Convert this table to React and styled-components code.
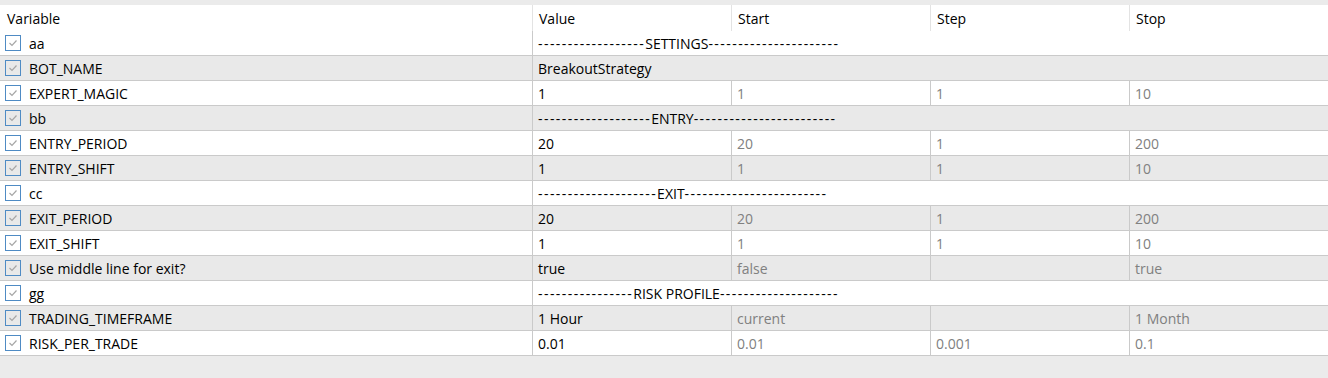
import React from 'react'
import styled, { createGlobalStyle } from 'styled-components'

const GlobalStyle = createGlobalStyle`
    html, body {
        margin: 0;
        padding: 0;
        background: #f0f0f0;
    }
    body {
        font-family: 'Open Sans', 'Noto Sans', sans-serif;
        font-size: 14px;
        color: #000;
    }
`

const params = [
    { name: 'aa', value: '------------------SETTINGS----------------------', span: true },
    { name: 'BOT_NAME', value: 'BreakoutStrategy', span: true },
    { name: 'EXPERT_MAGIC', value: '1', start: '1', step: '1', stop: '10' },
    { name: 'bb', value: '-------------------ENTRY------------------------', span: true },
    { name: 'ENTRY_PERIOD', value: '20', start: '20', step: '1', stop: '200' },
    { name: 'ENTRY_SHIFT', value: '1', start: '1', step: '1', stop: '10' },
    { name: 'cc', value: '--------------------EXIT------------------------', span: true },
    { name: 'EXIT_PERIOD', value: '20', start: '20', step: '1', stop: '200' },
    { name: 'EXIT_SHIFT', value: '1', start: '1', step: '1', stop: '10' },
    { name: 'Use middle line for exit?', value: 'true', start: 'false', step: '', stop: 'true' },
    { name: 'gg', value: '----------------RISK PROFILE--------------------', span: true },
    { name: 'TRADING_TIMEFRAME', value: '1 Hour', start: 'current', step: '', stop: '1 Month' },
    { name: 'RISK_PER_TRADE', value: '0.01', start: '0.01', step: '0.001', stop: '0.1' },
]

const Panel = styled.div`
    height: 378px;
    padding-top: 5px;
    box-sizing: border-box;
    background: #ebebeb;
    overflow: hidden;
`

const Grid = styled.div`
    display: grid;
    grid-template-columns: 532px 199px 199px 199px 199px;
    background: #fff;
`

const HeadCell = styled.div`
    height: 25px;
    padding-top: 1px;
    line-height: 26px;
    padding-left: ${p => (p.first ? '7px' : '6px')};
    border-left: ${p => (p.first ? 'none' : '1px solid #e3e3e3')};
    background: #fff;
    white-space: nowrap;
`

const Cell = styled.div`
    height: 23px;
    padding-top: 1px;
    line-height: 23px;
    padding-left: 5px;
    border-bottom: 1px solid #cacaca;
    border-left: ${p => (p.first ? 'none' : '1px solid #cacaca')};
    background: ${p => (p.odd ? '#e9e9e9' : '#fff')};
    color: ${p => (p.dim ? '#808080' : '#000')};
    grid-column: ${p => (p.span ? 'span 4' : 'auto')};
    white-space: nowrap;
    overflow: hidden;
    display: flex;
    align-items: center;
`

const Dashes = styled.span`
    letter-spacing: 1.45px;
`

const Check = styled.span`
    width: 14px;
    height: 14px;
    margin-top: -1px;
    border: 1px solid #4f8bc4;
    margin-right: 8px;
    display: inline-flex;
    align-items: center;
    justify-content: center;
    flex-shrink: 0;
`

const CheckBox = () => (
    <Check>
        <svg width="12" height="12" viewBox="0 0 12 12">
            <path d="M2.5 6 L5 8.5 L9.5 3.5" fill="none" stroke="#a6a6a6" strokeWidth="1.2" />
        </svg>
    </Check>
)

// separator titles: widen the runs of dashes the way the terminal font draws them
const Title = ({ text }) => (
    <span>
        {text.split(/(-+)/).filter(Boolean).map((part, i) =>
            part[0] === '-' ? <Dashes key={i}>{part}</Dashes> : <span key={i}>{part}</span>
        )}
    </span>
)

const App = () => {
    return (
        <Panel>
            <GlobalStyle />
            <Grid>
                <HeadCell first>Variable</HeadCell>
                <HeadCell>Value</HeadCell>
                <HeadCell>Start</HeadCell>
                <HeadCell>Step</HeadCell>
                <HeadCell>Stop</HeadCell>
                {params.map((p, i) => {
                    const odd = i % 2 === 1
                    return (
                        <React.Fragment key={p.name}>
                            <Cell first odd={odd}><CheckBox />{p.name}</Cell>
                            {p.span ? (
                                <Cell odd={odd} span><Title text={p.value} /></Cell>
                            ) : (
                                <>
                                    <Cell odd={odd}>{p.value}</Cell>
                                    <Cell odd={odd} dim>{p.start}</Cell>
                                    <Cell odd={odd} dim>{p.step}</Cell>
                                    <Cell odd={odd} dim>{p.stop}</Cell>
                                </>
                            )}
                        </React.Fragment>
                    )
                })}
            </Grid>
        </Panel>
    )
}

export default App
